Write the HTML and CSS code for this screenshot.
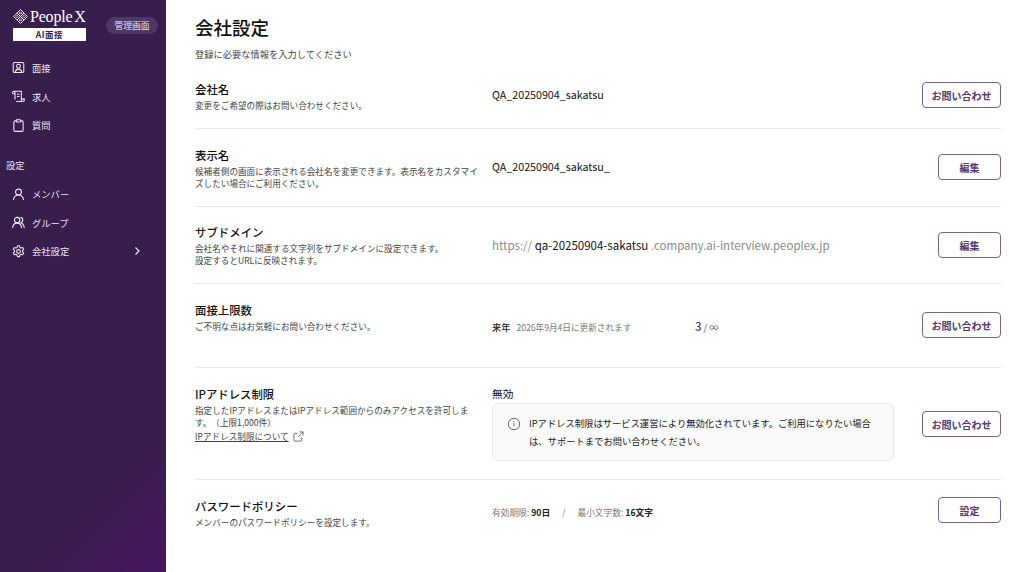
FILE: index.html
```html
<!DOCTYPE html>
<html lang="ja">
<head>
<meta charset="utf-8">
<title>会社設定</title>
<link rel="stylesheet" href="styles.css">
</head>
<body>
<div class="app">
  <aside class="sidebar">
    <div class="brand">
      <div class="logo-block">
        <div class="logo">
          <svg class="logo-mark" viewBox="0 0 16 16" fill="none" stroke="#fff" stroke-width=".9">
            <path d="M8 .6 11.700 4.300 8 8 4.300 4.300z"/><path d="M11.700 4.300 15.400 8 11.700 11.700 8 8z"/><path d="M8 8 11.700 11.700 8 15.400 4.300 11.700z"/><path d="M4.300 4.300 8 8 4.300 11.700.6 8z"/><path d="M8 3 9.300 4.300 8 5.600 6.700 4.300zM8 10.400 9.300 11.700 8 13 6.700 11.700zM3 8 4.300 6.700 5.600 8 4.300 9.300zM10.400 8 11.700 6.700 13 8 11.700 9.300z"/>
          </svg>
          <span class="logo-text">People X</span>
        </div>
        <div class="logo-tag">AI面接</div>
      </div>
      <span class="admin-pill">管理画面</span>
    </div>
    <nav class="nav">
      <a class="nav-item"><svg class="nav-icon" viewBox="0 0 16 16" fill="none" stroke="#efeaf3" stroke-width="1.300"><rect x="1.500" y="1.800" width="13" height="12.400" rx="1.600"/><circle cx="8" cy="6.400" r="2.400"/><path d="M4 13.800c.4-2.500 1.900-3.800 4-3.800s3.600 1.300 4 3.800"/></svg><span>面接</span></a>
      <a class="nav-item"><svg class="nav-icon" viewBox="0 0 16 16" fill="none" stroke="#efeaf3" stroke-width="1.300"><path d="M.8 4.600V3c0-.9.700-1.500 1.500-1.500h9.200v10.800c0 1 .7 1.900 1.700 1.900H5.200"/><path d="M.8 4.600h2.900V3c0-.9-.6-1.500-1.400-1.500M3.700 4.600v7.200M6.200 5.300h3M6.200 8h3M11.500 11.200h3.700v1.100c0 1-.8 1.900-1.900 1.900"/></svg><span>求人</span></a>
      <a class="nav-item"><svg class="nav-icon" viewBox="0 0 16 16" fill="none" stroke="#efeaf3" stroke-width="1.300"><path d="M5.300 2.300H3.800c-.9 0-1.500.6-1.500 1.500v9.900c0 .9.600 1.500 1.500 1.500h8.400c.9 0 1.500-.6 1.500-1.500V3.800c0-.9-.6-1.500-1.500-1.500h-1.500"/><rect x="5.300" y=".9" width="5.400" height="2.800" rx=".7"/></svg><span>質問</span></a>
    </nav>
    <div class="nav-heading">設定</div>
    <nav class="nav sub">
      <a class="nav-item"><svg class="nav-icon" viewBox="0 0 16 16" fill="none" stroke="#efeaf3" stroke-width="1.300"><circle cx="8" cy="5" r="3.600"/><path d="M1.800 14.800c.4-3.700 2.800-6.200 6.200-6.200s5.800 2.500 6.200 6.200"/></svg><span>メンバー</span></a>
      <a class="nav-item"><svg class="nav-icon" viewBox="0 0 16 16" fill="none" stroke="#efeaf3" stroke-width="1.300"><circle cx="6.300" cy="5" r="3.300"/><path d="M.8 14.800c.3-3.700 2.400-6 5.500-6s5.200 2.300 5.500 6M10.500 1.700c1.700.3 2.800 1.600 2.800 3.300 0 1.500-.9 2.700-2.300 3.200 2.400.9 3.800 3.300 4.200 6.600"/></svg><span>グループ</span></a>
      <a class="nav-item"><svg class="nav-icon" viewBox="0 0 16 16" fill="none" stroke="#efeaf3" stroke-width="1.300"><circle cx="8" cy="8" r="2.300"/><path d="M6.700 1h2.600l.5 2 1.300.8 2-.6 1.300 2.300-1.500 1.400v1.500l1.500 1.400-1.300 2.300-2-.6-1.300.8-.5 2H6.700l-.5-2-1.300-.8-2 .6-1.300-2.300 1.500-1.400V6.900L1.600 5.500l1.300-2.300 2 .6 1.300-.8z" stroke-linejoin="round"/></svg><span>会社設定</span><svg class="chevron" viewBox="0 0 8 10" fill="none" stroke="#efeaf3" stroke-width="1.200"><path d="M2.500 1.500 6 5 2.500 8.500"/></svg></a>
    </nav>
  </aside>
  <main class="main">
    <h1 class="page-title">会社設定</h1>
    <p class="page-sub">登録に必要な情報を入力してください</p>

    <section class="row r1">
      <div class="label"><h2>会社名</h2><p>変更をご希望の際はお問い合わせください。</p></div>
      <div class="value">QA_20250904_sakatsu</div>
      <a class="btn">お問い合わせ</a>
    </section>
    <section class="row r2">
      <div class="label"><h2>表示名</h2><p>候補者側の画面に表示される会社名を変更できます。表示名をカスタマイズしたい場合にご利用ください。</p></div>
      <div class="value">QA_20250904_sakatsu_</div>
      <a class="btn narrow">編集</a>
    </section>
    <section class="row r3">
      <div class="label"><h2>サブドメイン</h2><p>会社名やそれに関連する文字列をサブドメインに設定できます。<br>設定するとURLに反映されます。</p></div>
      <div class="value domain"><span class="muted">https://</span> <span>qa-20250904-sakatsu</span> <span class="muted">.company.ai-interview.peoplex.jp</span></div>
      <a class="btn narrow">編集</a>
    </section>
    <section class="row r4">
      <div class="label"><h2>面接上限数</h2><p>ご不明な点はお気軽にお問い合わせください。</p></div>
      <div class="value quota">
        <span class="renew"><b>来年</b><span>2026年9月4日に更新されます</span></span>
        <span class="count"><b>3</b> / ∞</span>
      </div>
      <a class="btn">お問い合わせ</a>
    </section>
    <section class="row r5">
      <div class="label"><h2>IPアドレス制限</h2><p>指定したIPアドレスまたはIPアドレス範囲からのみアクセスを許可します。（上限1,000件）</p>
        <a class="doc-link"><span>IPアドレス制限について</span><svg viewBox="0 0 12 12" fill="none" stroke="#555" stroke-width=".9"><path d="M9.500 7v3a1 1 0 0 1-1 1h-6.500a1 1 0 0 1-1-1V3.500a1 1 0 0 1 1-1h3M7 1h4v4M11 1 5.500 6.500"/></svg></a>
      </div>
      <div class="value ip">
        <div class="ip-state">無効</div>
        <div class="notice">
          <svg viewBox="0 0 14 14" fill="none" stroke="#555" stroke-width=".9"><circle cx="7" cy="7" r="5.700"/><path d="M7 6.300v3.200M7 4.200v.9"/></svg>
          <p>IPアドレス制限はサービス運営により無効化されています。ご利用になりたい場合は、サポートまでお問い合わせください。</p>
        </div>
      </div>
      <a class="btn">お問い合わせ</a>
    </section>
    <section class="row r6">
      <div class="label"><h2>パスワードポリシー</h2><p>メンバーのパスワードポリシーを設定します。</p></div>
      <div class="value policy"><span>有効期限: <b>90日</b></span><span class="slash">/</span><span>最小文字数: <b>16文字</b></span></div>
      <a class="btn narrow">設定</a>
    </section>
  </main>
</div>
</body>
</html>
```
FILE: styles.css
```css
* { box-sizing: border-box; }
html, body { margin: 0; height: 100%; }
body { font-family: "Noto Sans CJK JP", "Noto Sans", sans-serif; color: #1c1c1c; background: #fff; overflow: hidden; text-spacing-trim: space-all; }
.app { display: flex; height: 572px; }
.sidebar { width: 166px; flex: none; color: #e9e3ee; background: linear-gradient(135deg, #371e4c 0%, #371e4c 80%, #46175f 100%); }
.brand { display: flex; align-items: flex-start; gap: 20px; padding: 7px 8px 0 13px; height: 44px; }
.logo-block { width: 73px; flex: none; }
.logo { display: flex; align-items: center; gap: 2px; height: 19px; }
.logo-mark { width: 15px; height: 15px; flex: none; }
.logo-text { font-family: "Liberation Serif", serif; font-size: 16px; color: #fff; white-space: nowrap; letter-spacing: -.2px; word-spacing: -2px; }
.logo-tag { background: #fff; color: #371e4c; font-size: 8.500px; font-weight: 700; text-align: center; height: 13px; line-height: 13px; margin-top: 2px; letter-spacing: .5px; }
.admin-pill { width: 52px; height: 17px; line-height: 17px; flex: none; margin-top: 10px; border-radius: 9px; background: #4f3766; text-align: center; font-size: 8.750px; color: #e9e3ee; white-space: nowrap; }
.nav { display: flex; flex-direction: column; padding: 9.650px 0 0 12px; }
.nav-item { display: flex; align-items: center; gap: 7px; height: 28.700px; font-size: 9.300px; color: #e9e3ee; }
.nav-icon { width: 13px; height: 13px; flex: none; }
.nav-heading { font-size: 9.300px; padding: 18.250px 0 0 6px; height: 40px; line-height: 14px; }
.nav.sub { padding-top: 0; }
.chevron { width: 8px; height: 10px; margin-left: auto; margin-right: 25px; }

.main { flex: 1; min-width: 0; padding: 0 23px 0 29px; }
.page-title { margin: 0; padding-top: 14px; font-size: 18.500px; font-weight: 500; line-height: 27px; color: #111; }
.page-sub { margin: 0; padding-top: 6px; font-size: 9.250px; line-height: 14px; color: #444; height: 31px; }
.row { display: grid; grid-template-columns: 285px 1fr auto; column-gap: 12px; align-items: start; border-bottom: 1px solid #e8e8e8; }
.r1 { height: 57px; }
.r2 { height: 78px; }
.r3 { height: 77px; }
.r4 { height: 84px; }
.r5 { height: 112px; }
.r6 { height: 62px; border-bottom: 0; }
.label { padding-top: 17.500px; }
.r1 .label { padding-top: 8.500px; }
.r3 .label { padding-top: 16.500px; }
.label h2 { margin: 0; font-size: 11.400px; font-weight: 500; line-height: 17px; color: #111; }
.label p { margin: 0; padding-top: 2.500px; font-size: 8.600px; line-height: 11.500px; color: #444; }
.value { font-size: 10.700px; line-height: 16px; color: #111; padding-top: 30px; }
.r1 .value { padding-top: 15px; }
.r4 .value { padding-top: 34px; }
.r5 .value { padding-top: 18px; }
.r6 .value { padding-top: 25px; }
.domain { font-size: 11.500px; }
.muted { color: #8a8a8a; }
.btn { display: flex; align-items: center; justify-content: center; width: 79px; height: 26px; margin-top: 25px; border: 1px solid #7b628f; border-radius: 4px; font-size: 10px; font-weight: 700; color: #553a70; background: #fff; }
.btn.narrow { width: 63px; }
.r1 .btn { margin-top: 10px; }
.r4 .btn { margin-top: 28px; }
.r5 .btn { margin-top: 43px; }
.r6 .btn { margin-top: 17px; }
.quota { display: flex; align-items: center; }
.renew { display: flex; align-items: center; gap: 6px; width: 203px; font-size: 8.650px; color: #777; }
.renew b { font-size: 9.200px; font-weight: 500; color: #222; }
.count { font-size: 9.200px; color: #555; }
.count b { font-size: 11.500px; font-weight: 500; color: #54377a; }
.doc-link { display: flex; align-items: center; gap: 4px; padding-top: 2px; font-size: 8.600px; line-height: 13px; color: #444; }
.doc-link span { text-decoration: underline; }
.doc-link svg { width: 11px; height: 11px; }
.ip-state { font-size: 10.700px; line-height: 16px; margin-bottom: 1px; }
.notice { display: flex; gap: 8px; width: 402px; height: 58px; padding: 11px 20px 0 14px; background: #fafafa; border: 1px solid #e8e8e8; border-radius: 6px; }
.notice svg { width: 14px; height: 14px; flex: none; margin-top: 2px; }
.notice p { margin: 0; font-size: 9.300px; line-height: 17.500px; color: #222; }
.policy { display: flex; font-size: 8.700px; color: #777; }
.policy b { font-weight: 700; color: #222; }
.slash { margin: 0 12px; }
```
